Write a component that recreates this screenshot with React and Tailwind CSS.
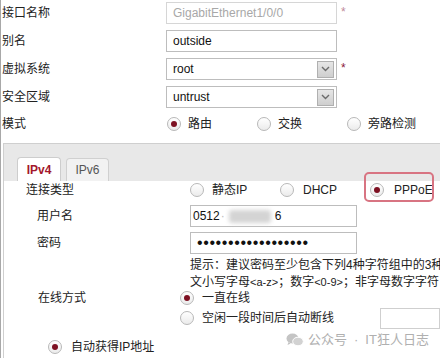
import React from "react";

const Radio = ({ checked }) => (
  <span className="w-[14px] h-[14px] rounded-full border border-[#b8b8b8] bg-gradient-to-b from-white to-[#ebebeb] flex items-center justify-center shrink-0">
    {checked && <span className="w-[6px] h-[6px] rounded-full bg-[#7d1022]" />}
  </span>
);

const Chevron = () => (
  <span className="w-[17px] h-[17px] border border-[#b0b0b0] bg-gradient-to-b from-[#e6e6e6] to-[#cfcfcf] flex items-center justify-center">
    <svg width="9" height="6" viewBox="0 0 9 6" fill="none" stroke="#6b6b6b" strokeWidth="1.4">
      <path d="M1 1l3.5 3.5L8 1" />
    </svg>
  </span>
);

const FormRow = ({ label, children, star, starColor }) => (
  <div className="flex items-center h-[22px]">
    <div className="w-[165px] pl-[1px] text-[12px] text-[#222]">{label}</div>
    {children}
    {star && <span className={`ml-[4px] text-[12px] ${starColor} -mt-[2px]`}>*</span>}
  </div>
);

const WeChatIcon = () => (
  <svg width="18" height="14" viewBox="0 0 18 14" fill="#c4c4c4">
    <ellipse cx="6.5" cy="5.5" rx="6" ry="5" />
    <path d="M2.5 9l-1 3 3.2-1.6z" />
    <ellipse cx="12" cy="8.5" rx="5.3" ry="4.3" fill="#d2d2d2" stroke="#fff" strokeWidth="1" />
  </svg>
);

export default function App() {
  return (
    <div className="w-[440px] h-[358px] overflow-hidden bg-white relative border-l border-[#a8a8a8] font-['Liberation_Sans','Noto_Sans_CJK_SC',sans-serif] text-[12px] text-[#222]">
      <div className="flex flex-col gap-[6px] pt-[2px]">
        <FormRow label="接口名称" star starColor="text-[#c08a9a]">
          <div className="w-[171px] h-[22px] border border-[#d6d6d6] pl-[6px] flex items-center text-[12px] text-[#a8a8a8] whitespace-nowrap overflow-hidden">
            GigabitEthernet1/0/0
          </div>
        </FormRow>
        <FormRow label="别名">
          <div className="w-[171px] h-[22px] border border-[#bdbdbd] pl-[6px] flex items-center text-[12px] text-[#111]">
            outside
          </div>
        </FormRow>
        <FormRow label="虚拟系统" star starColor="text-[#8b1a3a]">
          <div className="w-[171px] h-[22px] border border-[#bdbdbd] pl-[6px] pr-[2px] flex items-center justify-between text-[12px] text-[#111]">
            <span>root</span>
            <Chevron />
          </div>
        </FormRow>
        <FormRow label="安全区域">
          <div className="w-[171px] h-[22px] border border-[#bdbdbd] pl-[6px] pr-[2px] flex items-center justify-between text-[12px] text-[#111]">
            <span>untrust</span>
            <Chevron />
          </div>
        </FormRow>
      </div>

      <div className="flex items-center h-[24px] mt-[4px]">
        <div className="w-[166px] pl-[1px]">模式</div>
        <div className="flex items-center w-[90px] gap-[7px]">
          <Radio checked />
          <span>路由</span>
        </div>
        <div className="flex items-center w-[90px] gap-[7px]">
          <Radio />
          <span>交换</span>
        </div>
        <div className="flex items-center gap-[7px]">
          <Radio />
          <span className="whitespace-nowrap">旁路检测</span>
        </div>
      </div>

      <div className="mt-[7px] ml-[2px] border-t border-l border-[#cfcfcf] h-[220px]">
        <div className="h-[37px] bg-[#e8e8e8] flex items-end pl-[13px] gap-[5px]">
          <div className="w-[44px] h-[24px] bg-white border border-b-0 border-[#cdcdcd] rounded-t-[4px] flex items-center justify-center text-[12px] font-bold text-[#a3182c]">
            IPv4
          </div>
          <div className="w-[43px] h-[23px] bg-[#f2f2f2] border border-b-0 border-[#d0d0d0] rounded-t-[4px] flex items-center justify-center text-[12px] text-[#555]">
            IPv6
          </div>
        </div>

        <div className="flex items-center h-[17px]">
          <div className="w-[186px] pl-[22px]">连接类型</div>
          <div className="flex items-center w-[90px] gap-[8px]">
            <Radio />
            <span>静态IP</span>
          </div>
          <div className="flex items-center w-[90px] gap-[9px]">
            <Radio />
            <span>DHCP</span>
          </div>
          <div className="flex items-center gap-[10px]">
            <Radio checked />
            <span>PPPoE</span>
          </div>
        </div>

        <div className="flex items-center h-[22px] mt-[7px]">
          <div className="w-[186px] pl-[33px]">用户名</div>
          <div className="w-[167px] h-[22px] border border-[#bdbdbd] pl-[2px] flex items-center text-[12px] text-[#111]">
            <span>0512</span>
            <span className="text-[#bbb] ml-[1px]">·</span>
            <span className="w-[42px] h-[13px] ml-[4px] bg-[#d4d4d4] blur-[2px] rounded-[3px]" />
            <span className="ml-[4px]">6</span>
          </div>
        </div>

        <div className="flex items-center h-[22px] mt-[5px]">
          <div className="w-[186px] pl-[33px]">密码</div>
          <div className="w-[167px] h-[22px] border border-[#bdbdbd] pl-[6px] flex items-center text-[16px] tracking-[0.6px] text-[#111] overflow-hidden">
            ••••••••••••••••••
          </div>
        </div>

        <div className="pl-[186px] mt-[2px] whitespace-nowrap text-[12px] text-[#222]">
          <div className="h-[18px] leading-[18px]">提示：建议密码至少包含下列4种字符组中的3种</div>
          <div className="h-[17px] leading-[17px]">
            文小写字母<span className="text-[11px]">&lt;a-z&gt;</span>；数字<span className="text-[11px]">&lt;0-9&gt;</span>；非字母数字字符
          </div>
        </div>

        <div className="flex">
          <div className="w-[186px] pl-[34px] h-[14px] leading-[14px]">在线方式</div>
          <div className="flex flex-col">
            <div className="flex items-center h-[14px] gap-[8px]">
              <Radio checked />
              <span>一直在线</span>
            </div>
            <div className="flex items-center h-[14px] gap-[8px] mt-[6px]">
              <Radio />
              <span className="whitespace-nowrap">空闲一段时间后自动断线</span>
              <span className="w-[60px] h-[21px] border border-[#cfcfcf] ml-[38px] shrink-0" />
            </div>
          </div>
        </div>

        <div className="flex items-center h-[14px] mt-[15px] pl-[44px] gap-[9px]">
          <Radio checked />
          <span>自动获得IP地址</span>
        </div>
      </div>

      <div className="absolute left-[363px] top-[172px] w-[70px] h-[30px] border-2 border-[#d87482] rounded-[5px]" />

      <div className="absolute left-[285px] top-[330px] flex items-center gap-[4px] text-[13px] text-[#b0b0b0] whitespace-nowrap">
        <WeChatIcon />
        <span>公众号</span>
        <span className="mx-[3px]">·</span>
        <span>IT狂人日志</span>
      </div>
    </div>
  );
}
